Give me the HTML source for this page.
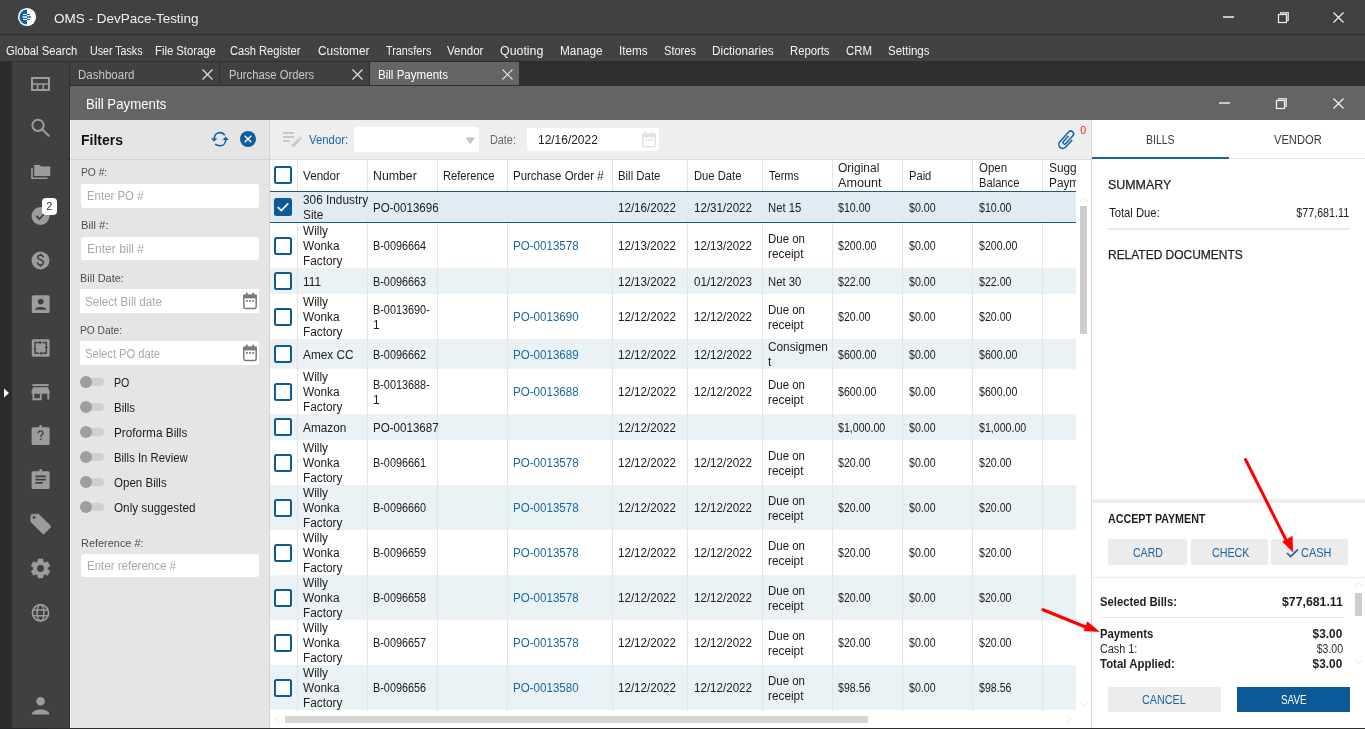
<!DOCTYPE html>
<html><head><meta charset="utf-8"><style>
html,body{margin:0;padding:0;}
body{width:1365px;height:729px;overflow:hidden;position:relative;background:#404040;font-family:"Liberation Sans",sans-serif;}
.b{position:absolute;}
.t{position:absolute;white-space:nowrap;}
#wrap{position:absolute;left:0;top:0;width:1365px;height:729px;overflow:hidden;will-change:transform;}
</style></head><body><div id="wrap">
<div class="b" style="left:0px;top:0px;width:1365px;height:34px;background:#414141;"></div>
<div class="b" style="left:0px;top:34px;width:1365px;height:1px;background:#2e2e2e;"></div>
<div class="b" style="left:0px;top:35px;width:1365px;height:26px;background:#424242;"></div>
<div class="b" style="left:0px;top:61px;width:1365px;height:1px;background:#2f2f2f;"></div>
<div class="b" style="left:0px;top:62px;width:12px;height:667px;background:#2b2b2b;"></div>
<div class="b" style="left:12px;top:62px;width:57px;height:667px;background:#404040;"></div>
<div class="b" style="left:69px;top:62px;width:1px;height:667px;background:#2f2f2f;"></div>
<div class="b" style="left:70px;top:62px;width:1295px;height:24px;background:#2f2f2f;"></div>
<div class="b" style="left:70px;top:62px;width:149px;height:23px;background:#404040;"></div>
<div class="b" style="left:220px;top:62px;width:149px;height:23px;background:#404040;"></div>
<div class="b" style="left:370px;top:62px;width:149px;height:23px;background:#656565;"></div>
<div class="b" style="left:70px;top:86px;width:1295px;height:34px;background:#646464;"></div>
<div class="b" style="left:70px;top:120px;width:199px;height:609px;background:#e5e5e5;"></div>
<div class="b" style="left:269px;top:120px;width:1px;height:609px;background:#d4d4d4;"></div>
<div class="b" style="left:270px;top:120px;width:822px;height:39px;background:#eeeeee;"></div>
<div class="b" style="left:270px;top:159px;width:822px;height:1px;background:#dcdcdc;"></div>
<div class="b" style="left:270px;top:160px;width:821px;height:569px;background:#ffffff;"></div>
<div class="b" style="left:1091px;top:120px;width:1px;height:609px;background:#dadada;"></div>
<div class="b" style="left:1092px;top:120px;width:273px;height:609px;background:#ffffff;"></div>
<div class="b" style="left:70px;top:120px;width:1px;height:608px;background:#f3f3f3;"></div>
<div class="b" style="left:0px;top:728px;width:1365px;height:1px;background:#2c2c2c;"></div>
<div class="b" style="left:0px;top:728px;width:48px;height:1px;background:#1d2b31;"></div>
<svg class="b" style="left:17px;top:7px" width="20" height="20" viewBox="0 0 20 20">
<circle cx="10" cy="10" r="9.1" fill="#ffffff"/>
<path d="M10 2.4 A7.6 7.6 0 0 0 10 17.6 Z" fill="#0f62a4"/>
<rect x="6" y="7" width="4" height="1.1" fill="#fff"/><rect x="5.6" y="9.3" width="4.4" height="1.5" fill="#fff"/><rect x="6" y="11.9" width="4" height="1.1" fill="#fff"/>
<rect x="10" y="7" width="3" height="1.1" fill="#0f62a4"/><rect x="10" y="9.3" width="3.8" height="1.5" fill="#0f62a4"/><rect x="10" y="11.9" width="3" height="1.1" fill="#0f62a4"/>
</svg>
<div class="t" style="top:10.00px;font-size:13.5px;line-height:17px;color:#f2f2f2;left:54.40px;transform:scaleX(0.9987);transform-origin:0 0;">OMS - DevPace-Testing</div>
<div class="b" style="left:1223px;top:16px;width:11px;height:2px;background:#c4c4c4;"></div>
<svg class="b" style="left:1277px;top:11px" width="13" height="13" viewBox="0 0 13 13">
<rect x="3.5" y="1.5" width="8" height="8" fill="#9a9a9a" stroke="#d0d0d0" stroke-width="1"/>
<rect x="1.5" y="3.5" width="8" height="8" fill="#414141" stroke="#f0f0f0" stroke-width="1.2"/>
</svg>
<svg class="b" style="left:1333px;top:12px" width="11" height="11" viewBox="0 0 11 11">
<path d="M0.5 0.5 L10.5 10.5 M10.5 0.5 L0.5 10.5" stroke="#f0f0f0" stroke-width="1.2"/></svg>
<div class="t" style="top:44.00px;font-size:12px;line-height:15px;color:#f4f4f4;left:6.20px;transform:scaleX(0.9379);transform-origin:0 0;">Global Search</div>
<div class="t" style="top:44.00px;font-size:12px;line-height:15px;color:#f4f4f4;left:90.20px;transform:scaleX(0.8883);transform-origin:0 0;">User Tasks</div>
<div class="t" style="top:44.00px;font-size:12px;line-height:15px;color:#f4f4f4;left:155.20px;transform:scaleX(0.9400);transform-origin:0 0;">File Storage</div>
<div class="t" style="top:44.00px;font-size:12px;line-height:15px;color:#f4f4f4;left:230.40px;transform:scaleX(0.9274);transform-origin:0 0;">Cash Register</div>
<div class="t" style="top:44.00px;font-size:12px;line-height:15px;color:#f4f4f4;left:317.50px;transform:scaleX(0.9900);transform-origin:0 0;">Customer</div>
<div class="t" style="top:44.00px;font-size:12px;line-height:15px;color:#f4f4f4;left:385.50px;transform:scaleX(0.9020);transform-origin:0 0;">Transfers</div>
<div class="t" style="top:44.00px;font-size:12px;line-height:15px;color:#f4f4f4;left:447.20px;transform:scaleX(0.9569);transform-origin:0 0;">Vendor</div>
<div class="t" style="top:44.00px;font-size:12px;line-height:15px;color:#f4f4f4;left:500.00px;transform:scaleX(1.0319);transform-origin:0 0;">Quoting</div>
<div class="t" style="top:44.00px;font-size:12px;line-height:15px;color:#f4f4f4;left:560.30px;transform:scaleX(0.9843);transform-origin:0 0;">Manage</div>
<div class="t" style="top:44.00px;font-size:12px;line-height:15px;color:#f4f4f4;left:619.20px;transform:scaleX(0.9782);transform-origin:0 0;">Items</div>
<div class="t" style="top:44.00px;font-size:12px;line-height:15px;color:#f4f4f4;left:664.00px;transform:scaleX(0.9227);transform-origin:0 0;">Stores</div>
<div class="t" style="top:44.00px;font-size:12px;line-height:15px;color:#f4f4f4;left:712.00px;transform:scaleX(0.9825);transform-origin:0 0;">Dictionaries</div>
<div class="t" style="top:44.00px;font-size:12px;line-height:15px;color:#f4f4f4;left:790.30px;transform:scaleX(0.9381);transform-origin:0 0;">Reports</div>
<div class="t" style="top:44.00px;font-size:12px;line-height:15px;color:#f4f4f4;left:846.00px;transform:scaleX(0.9524);transform-origin:0 0;">CRM</div>
<div class="t" style="top:44.00px;font-size:12px;line-height:15px;color:#f4f4f4;left:888.00px;transform:scaleX(0.9567);transform-origin:0 0;">Settings</div>
<div class="t" style="top:68.00px;font-size:12px;line-height:15px;color:#c9c9c9;left:78.30px;transform:scaleX(0.9611);transform-origin:0 0;">Dashboard</div>
<div class="t" style="top:68.00px;font-size:12px;line-height:15px;color:#c9c9c9;left:228.50px;transform:scaleX(0.9381);transform-origin:0 0;">Purchase Orders</div>
<div class="t" style="top:68.00px;font-size:12px;line-height:15px;color:#ffffff;left:378.40px;transform:scaleX(0.9640);transform-origin:0 0;">Bill Payments</div>
<svg class="b" style="left:202px;top:69px" width="11" height="11" viewBox="0 0 11 11"><path d="M0.5 0.5 L10.5 10.5 M10.5 0.5 L0.5 10.5" stroke="#e0e0e0" stroke-width="1.2"/></svg>
<svg class="b" style="left:352px;top:69px" width="11" height="11" viewBox="0 0 11 11"><path d="M0.5 0.5 L10.5 10.5 M10.5 0.5 L0.5 10.5" stroke="#e0e0e0" stroke-width="1.2"/></svg>
<svg class="b" style="left:502px;top:69px" width="11" height="11" viewBox="0 0 11 11"><path d="M0.5 0.5 L10.5 10.5 M10.5 0.5 L0.5 10.5" stroke="#e0e0e0" stroke-width="1.2"/></svg>
<div class="t" style="top:95.00px;font-size:14px;line-height:18px;color:#ffffff;left:86.40px;transform:scaleX(0.9465);transform-origin:0 0;">Bill Payments</div>
<div class="b" style="left:1219px;top:102px;width:11px;height:2px;background:#c8c8c8;"></div>
<svg class="b" style="left:1275px;top:97px" width="13" height="13" viewBox="0 0 13 13">
<rect x="3.5" y="1.5" width="8" height="8" fill="#a8a8a8" stroke="#d8d8d8" stroke-width="1"/>
<rect x="1.5" y="3.5" width="8" height="8" fill="#646464" stroke="#f4f4f4" stroke-width="1.2"/>
</svg>
<svg class="b" style="left:1333px;top:98px" width="11" height="11" viewBox="0 0 11 11">
<path d="M0.5 0.5 L10.5 10.5 M10.5 0.5 L0.5 10.5" stroke="#f4f4f4" stroke-width="1.2"/></svg>
<svg class="b" style="left:30px;top:76px" width="21" height="16" viewBox="0 0 21 16">
<rect x="2" y="2" width="17" height="12" fill="none" stroke="#9c9c9c" stroke-width="2"/>
<path d="M2 8 H19 M7.6 8 V14 M13.3 8 V14" stroke="#9c9c9c" stroke-width="1.6"/></svg>
<svg class="b" style="left:30px;top:117px" width="21" height="21" viewBox="0 0 21 21">
<circle cx="8" cy="8.3" r="5.6" fill="none" stroke="#9c9c9c" stroke-width="2"/>
<path d="M12 12.3 L18.8 18.8" stroke="#9c9c9c" stroke-width="2" stroke-linecap="round"/></svg>
<svg class="b" style="left:30px;top:163px" width="21" height="18" viewBox="0 0 21 18">
<path d="M4.2 1.9 H9.5 L11.3 3.4 H20.3 V13.1 H4.2 Z" fill="#9c9c9c"/>
<path d="M2 5 V15.3 H17.5" fill="none" stroke="#9c9c9c" stroke-width="1.6"/></svg>
<svg class="b" style="left:30px;top:196px" width="30" height="32" viewBox="0 0 30 32">
<circle cx="10.5" cy="20" r="9" fill="#9c9c9c"/>
<path d="M6.3 20 L9.3 23 L15 17" fill="none" stroke="#404040" stroke-width="1.8"/>
<rect x="12" y="2" width="15" height="17" rx="4" fill="#ffffff"/></svg>
<div class="t" style="top:199.00px;font-size:11px;line-height:14px;color:#333;left:46.20px;">2</div>
<svg class="b" style="left:30px;top:250px" width="21" height="21" viewBox="0 0 21 21">
<circle cx="10.5" cy="10.5" r="9" fill="#9c9c9c"/>
<path d="M13.4 7.4 C13.2 5.9 12 5.3 10.5 5.3 C8.8 5.3 7.7 6.2 7.7 7.5 C7.7 10.2 13.5 9.4 13.5 12.6 C13.5 14.1 12.2 15 10.5 15 C8.8 15 7.6 14.2 7.4 12.6 M10.5 3.4 V5.3 M10.5 15 V17" fill="none" stroke="#404040" stroke-width="1.5"/></svg>
<svg class="b" style="left:30px;top:294px" width="21" height="21" viewBox="0 0 21 21">
<rect x="1.8" y="1.3" width="17.8" height="17.8" rx="1.5" fill="#9c9c9c"/>
<circle cx="10.7" cy="7.6" r="2.9" fill="#404040"/>
<path d="M5 15.8 C5 12 16.4 12 16.4 15.8 Z" fill="#404040"/></svg>
<svg class="b" style="left:30px;top:338px" width="21" height="21" viewBox="0 0 21 21">
<rect x="1.8" y="1.2" width="17.8" height="17.6" rx="1.5" fill="#9c9c9c"/>
<path d="M5 9.3 V4.6 H10 M12.3 4.6 H16.3 V9.3 M16.3 11.3 V15.3 H11.3 M9 15.3 H5 V11" fill="none" stroke="#404040" stroke-width="1.5"/>
<path d="M9.6 2.7 L12 4.6 L9.6 6.5 Z M14.4 9 L18.2 9 L16.3 11.4 Z M11.6 13.4 L9.2 15.3 L11.6 17.2 Z M3.1 11.3 L6.9 11.3 L5 8.9 Z" fill="#404040"/></svg>
<svg class="b" style="left:30px;top:382px" width="21" height="20" viewBox="0 0 21 20">
<rect x="2.4" y="2.1" width="16.3" height="1.9" fill="#9c9c9c"/>
<path d="M3.2 5.3 H18 L19.7 9.5 V11.7 H1.5 V9.5 Z" fill="#9c9c9c"/>
<path d="M3.4 11.5 V17.2 H10.8 V11.5 M18.3 11.5 V17.6" fill="none" stroke="#9c9c9c" stroke-width="1.9"/></svg>
<svg class="b" style="left:30px;top:424px" width="21" height="22" viewBox="0 0 21 22">
<rect x="1.6" y="3.2" width="18" height="17.8" rx="1.5" fill="#9c9c9c"/>
<circle cx="10.6" cy="2.6" r="1.5" fill="#9c9c9c"/>
<path d="M8.2 9.2 C8.2 7.6 9.2 6.9 10.6 6.9 C12 6.9 13 7.7 13 9 C13 10.8 10.7 10.9 10.7 13" fill="none" stroke="#404040" stroke-width="1.4"/><rect x="9.9" y="14.6" width="1.6" height="1.6" fill="#404040"/></svg>
<svg class="b" style="left:30px;top:468px" width="21" height="22" viewBox="0 0 21 22">
<rect x="1.6" y="3.2" width="18" height="17.8" rx="1.5" fill="#9c9c9c"/>
<circle cx="10.6" cy="2.6" r="1.5" fill="#9c9c9c"/>
<path d="M5.4 8.4 H15.8 M5.4 11.6 H15.8 M5.4 14.8 H12.8" stroke="#404040" stroke-width="1.7"/></svg>
<svg class="b" style="left:30px;top:513px" width="22" height="23" viewBox="0 0 22 23">
<path d="M0.8 3.2 Q0.8 1.2 2.8 1.2 L8.6 1.2 L20.3 12.6 Q21.2 13.6 20.3 14.5 L14.3 20.5 Q13.4 21.4 12.5 20.5 L0.8 8.8 Z" fill="#9c9c9c" stroke="#9c9c9c" stroke-width="0.6" stroke-linejoin="round"/>
<circle cx="4" cy="4.5" r="1.4" fill="#404040"/></svg>
<svg class="b" style="left:30px;top:557.5px" width="21" height="21" viewBox="0 0 21 21">
<path d="M7.70 3.87 L8.08 1.00 L12.92 1.00 L13.30 3.87 L14.84 4.76 L17.51 3.65 L19.94 7.85 L17.65 9.61 L17.65 11.39 L19.94 13.15 L17.51 17.35 L14.84 16.24 L13.30 17.13 L12.92 20.00 L8.08 20.00 L7.70 17.13 L6.16 16.24 L3.49 17.35 L1.06 13.15 L3.35 11.39 L3.35 9.61 L1.06 7.85 L3.49 3.65 L6.16 4.76 Z" fill="#9c9c9c" stroke="#9c9c9c" stroke-width="0.5" stroke-linejoin="round"/><circle cx="10.5" cy="10.5" r="3.4" fill="#404040"/></svg>
<svg class="b" style="left:30px;top:602px" width="21" height="21" viewBox="0 0 21 21">
<circle cx="10.5" cy="10.8" r="8.1" fill="none" stroke="#9c9c9c" stroke-width="1.7"/>
<ellipse cx="10.5" cy="10.8" rx="3.4" ry="8.1" fill="none" stroke="#9c9c9c" stroke-width="1.5"/>
<path d="M2.6 7.9 H18.4 M2.6 13.7 H18.4" stroke="#9c9c9c" stroke-width="1.5"/></svg>
<svg class="b" style="left:30px;top:695px" width="21" height="22" viewBox="0 0 21 22">
<circle cx="10.6" cy="6.3" r="4.3" fill="#9c9c9c"/>
<path d="M1.8 19.4 C2.2 12.8 19 12.8 19.4 19.4 Z" fill="#9c9c9c"/></svg>
<svg class="b" style="left:2px;top:387px" width="8" height="12" viewBox="0 0 8 12"><path d="M2 1.5 L7 6 L2 10.5 Z" fill="#ffffff"/></svg>
<div class="t" style="top:130.00px;font-size:15px;line-height:19px;color:#111111;font-weight:bold;left:80.80px;transform:scaleX(0.9311);transform-origin:0 0;">Filters</div>
<svg class="b" style="left:210px;top:131px" width="20" height="16" viewBox="0 0 20 16">
<path d="M14.8 4.2 C13.6 2.3 11.8 1.6 10 1.6 C6.6 1.6 4.3 4.2 4.3 7.6" fill="none" stroke="#1262a0" stroke-width="1.6"/>
<path d="M1 7.2 L7.2 7.2 L4.1 10.8 Z" fill="#1262a0"/>
<path d="M5.2 13.2 C6.4 14.3 8 14.8 10 14.8 C13.4 14.8 15.7 12.2 15.7 8.8" fill="none" stroke="#1262a0" stroke-width="1.6"/>
<path d="M12.6 9 L18.8 9 L15.7 5.4 Z" fill="#1262a0"/></svg>
<svg class="b" style="left:240px;top:131px" width="16" height="16" viewBox="0 0 16 16">
<circle cx="8" cy="8" r="8" fill="#0c5e9b"/>
<path d="M4.7 4.7 L11.3 11.3 M11.3 4.7 L4.7 11.3" stroke="#fff" stroke-width="1.3"/></svg>
<div class="b" style="left:70px;top:159px;width:199px;height:1px;background:#d3d3d3;"></div>
<div class="t" style="top:165.00px;font-size:11px;line-height:14px;color:#4f4f4f;left:80.80px;transform:scaleX(0.9322);transform-origin:0 0;">PO #:</div>
<div class="b" style="left:80.5px;top:184px;width:178px;height:24px;background:#ffffff;border-radius:3px;"></div>
<div class="t" style="top:189.00px;font-size:12px;line-height:15px;color:#a9a9a9;left:86.50px;transform:scaleX(0.9521);transform-origin:0 0;">Enter PO #</div>
<div class="t" style="top:218.00px;font-size:11px;line-height:14px;color:#4f4f4f;left:80.80px;transform:scaleX(1.0225);transform-origin:0 0;">Bill #:</div>
<div class="b" style="left:80.5px;top:237px;width:178px;height:23px;background:#ffffff;border-radius:3px;"></div>
<div class="t" style="top:242.00px;font-size:12px;line-height:15px;color:#a9a9a9;left:86.50px;transform:scaleX(1.0053);transform-origin:0 0;">Enter bill #</div>
<div class="t" style="top:271.00px;font-size:11px;line-height:14px;color:#4f4f4f;left:80.30px;transform:scaleX(0.9977);transform-origin:0 0;">Bill Date:</div>
<div class="b" style="left:80px;top:289px;width:179px;height:24px;background:#ffffff;"></div>
<div class="t" style="top:295.00px;font-size:12px;line-height:15px;color:#a9a9a9;left:85.00px;transform:scaleX(0.9700);transform-origin:0 0;">Select Bill date</div>
<div class="t" style="top:323.00px;font-size:11px;line-height:14px;color:#4f4f4f;left:80.30px;transform:scaleX(0.9279);transform-origin:0 0;">PO Date:</div>
<div class="b" style="left:80px;top:341px;width:179px;height:24px;background:#ffffff;"></div>
<div class="t" style="top:347.00px;font-size:12px;line-height:15px;color:#a9a9a9;left:85.00px;transform:scaleX(0.9294);transform-origin:0 0;">Select PO date</div>
<svg class="b" style="left:242px;top:292px" width="16" height="18" viewBox="0 0 16 18">
<rect x="1.8" y="3.2" width="12.4" height="13.2" rx="1.6" fill="none" stroke="#7a7a7a" stroke-width="1.5"/>
<rect x="1.2" y="2.6" width="13.6" height="3.8" fill="#7a7a7a"/>
<rect x="3.9" y="0.6" width="1.8" height="2.8" fill="#7a7a7a"/><rect x="10.3" y="0.6" width="1.8" height="2.8" fill="#7a7a7a"/>
<rect x="4" y="8" width="1.8" height="1.8" fill="#7a7a7a"/><rect x="7.1" y="8" width="1.8" height="1.8" fill="#7a7a7a"/><rect x="10.2" y="8" width="1.8" height="1.8" fill="#7a7a7a"/>
</svg>
<svg class="b" style="left:242px;top:344px" width="16" height="18" viewBox="0 0 16 18">
<rect x="1.8" y="3.2" width="12.4" height="13.2" rx="1.6" fill="none" stroke="#7a7a7a" stroke-width="1.5"/>
<rect x="1.2" y="2.6" width="13.6" height="3.8" fill="#7a7a7a"/>
<rect x="3.9" y="0.6" width="1.8" height="2.8" fill="#7a7a7a"/><rect x="10.3" y="0.6" width="1.8" height="2.8" fill="#7a7a7a"/>
<rect x="4" y="8" width="1.8" height="1.8" fill="#7a7a7a"/><rect x="7.1" y="8" width="1.8" height="1.8" fill="#7a7a7a"/><rect x="10.2" y="8" width="1.8" height="1.8" fill="#7a7a7a"/>
</svg>
<div class="b" style="left:86px;top:378.1px;width:18px;height:8.4px;background:#d0d0d0;border-radius:4.2px;"></div>
<div class="b" style="left:80px;top:376.3px;width:12px;height:12px;background:#9e9e9e;border-radius:50%;"></div>
<div class="t" style="top:376.00px;font-size:12px;line-height:15px;color:#1c1c1c;left:114.30px;transform:scaleX(0.8881);transform-origin:0 0;">PO</div>
<div class="b" style="left:86px;top:403.1px;width:18px;height:8.4px;background:#d0d0d0;border-radius:4.2px;"></div>
<div class="b" style="left:80px;top:401.3px;width:12px;height:12px;background:#9e9e9e;border-radius:50%;"></div>
<div class="t" style="top:401.00px;font-size:12px;line-height:15px;color:#1c1c1c;left:114.30px;transform:scaleX(0.9537);transform-origin:0 0;">Bills</div>
<div class="b" style="left:86px;top:428.1px;width:18px;height:8.4px;background:#d0d0d0;border-radius:4.2px;"></div>
<div class="b" style="left:80px;top:426.3px;width:12px;height:12px;background:#9e9e9e;border-radius:50%;"></div>
<div class="t" style="top:426.00px;font-size:12px;line-height:15px;color:#1c1c1c;left:114.30px;transform:scaleX(0.9826);transform-origin:0 0;">Proforma Bills</div>
<div class="b" style="left:86px;top:453.1px;width:18px;height:8.4px;background:#d0d0d0;border-radius:4.2px;"></div>
<div class="b" style="left:80px;top:451.3px;width:12px;height:12px;background:#9e9e9e;border-radius:50%;"></div>
<div class="t" style="top:451.00px;font-size:12px;line-height:15px;color:#1c1c1c;left:114.30px;transform:scaleX(0.9454);transform-origin:0 0;">Bills In Review</div>
<div class="b" style="left:86px;top:478.1px;width:18px;height:8.4px;background:#d0d0d0;border-radius:4.2px;"></div>
<div class="b" style="left:80px;top:476.3px;width:12px;height:12px;background:#9e9e9e;border-radius:50%;"></div>
<div class="t" style="top:476.00px;font-size:12px;line-height:15px;color:#1c1c1c;left:114.30px;transform:scaleX(0.9631);transform-origin:0 0;">Open Bills</div>
<div class="b" style="left:86px;top:503.1px;width:18px;height:8.4px;background:#d0d0d0;border-radius:4.2px;"></div>
<div class="b" style="left:80px;top:501.3px;width:12px;height:12px;background:#9e9e9e;border-radius:50%;"></div>
<div class="t" style="top:501.00px;font-size:12px;line-height:15px;color:#1c1c1c;left:114.30px;transform:scaleX(0.9772);transform-origin:0 0;">Only suggested</div>
<div class="t" style="top:536.00px;font-size:11px;line-height:14px;color:#4f4f4f;left:80.60px;transform:scaleX(0.9940);transform-origin:0 0;">Reference #:</div>
<div class="b" style="left:80.5px;top:554px;width:178px;height:23px;background:#ffffff;border-radius:3px;"></div>
<div class="t" style="top:559.00px;font-size:12px;line-height:15px;color:#a9a9a9;left:86.50px;transform:scaleX(0.9601);transform-origin:0 0;">Enter reference #</div>
<svg class="b" style="left:282px;top:131px" width="20" height="17" viewBox="0 0 20 17">
<path d="M1 2 H12 M1 6 H12 M1 10 H7.8" stroke="#c8c8c8" stroke-width="1.9"/>
<path d="M10.4 15.4 L17.6 8.2" stroke="#c8c8c8" stroke-width="3"/>
<path d="M18.2 7.6 L19.3 6.5" stroke="#c8c8c8" stroke-width="3"/></svg>
<div class="t" style="top:133.00px;font-size:12px;line-height:15px;color:#1a67a3;left:309.30px;transform:scaleX(0.9458);transform-origin:0 0;">Vendor:</div>
<div class="b" style="left:354px;top:127px;width:125px;height:25px;background:#ffffff;border-radius:3px;"></div>
<svg class="b" style="left:465px;top:137px" width="11" height="8" viewBox="0 0 11 8"><path d="M0.5 0.5 H10.2 L5.35 7.2 Z" fill="#c4c4c4"/></svg>
<div class="t" style="top:133.00px;font-size:12px;line-height:15px;color:#686868;left:489.50px;transform:scaleX(0.9031);transform-origin:0 0;">Date:</div>
<div class="b" style="left:527px;top:128px;width:132px;height:23px;background:#ffffff;border-radius:3px;"></div>
<div class="t" style="top:133.00px;font-size:12px;line-height:15px;color:#222222;left:537.80px;transform:scaleX(0.9957);transform-origin:0 0;">12/16/2022</div>
<svg class="b" style="left:641px;top:131px" width="16" height="17" viewBox="0 0 16 17">
<rect x="1.8" y="3.2" width="12.4" height="12.6" rx="1.6" fill="none" stroke="#e2e2e2" stroke-width="1.5"/>
<rect x="1.2" y="2.6" width="13.6" height="3.8" fill="#e2e2e2"/>
<rect x="3.9" y="0.6" width="1.8" height="2.8" fill="#e2e2e2"/><rect x="10.3" y="0.6" width="1.8" height="2.8" fill="#e2e2e2"/>
<rect x="4" y="8" width="1.8" height="1.8" fill="#e2e2e2"/><rect x="7.1" y="8" width="1.8" height="1.8" fill="#e2e2e2"/><rect x="10.2" y="8" width="1.8" height="1.8" fill="#e2e2e2"/>
</svg>
<svg class="b" style="left:1054px;top:127px" width="24" height="25" viewBox="0 0 24 25">
<g transform="translate(12.8 13) rotate(42) scale(0.88) translate(-5 -12.2)">
<path d="M9.5 8 V19 A4.5 4.5 0 0 1 0.5 19 V4 A3.2 3.2 0 0 1 6.9 4 V16 A1.8 1.8 0 0 1 3.3 16 V7.5" fill="none" stroke="#1565a0" stroke-width="1.75"/>
</g></svg>
<div class="t" style="top:124.00px;font-size:10.5px;line-height:13px;color:#ff1a1a;left:1080.30px;">0</div>
<div class="b" style="left:270px;top:160px;width:806px;height:551px;overflow:hidden;">
<div class="b" style="left:0px;top:31px;width:806px;height:32px;background:#e2ebf1;"></div>
<div class="b" style="left:0px;top:108px;width:806px;height:26px;background:#eaf2f6;"></div>
<div class="b" style="left:0px;top:179px;width:806px;height:30px;background:#eaf2f6;"></div>
<div class="b" style="left:0px;top:254px;width:806px;height:26px;background:#eaf2f6;"></div>
<div class="b" style="left:0px;top:325px;width:806px;height:45px;background:#eaf2f6;"></div>
<div class="b" style="left:0px;top:415px;width:806px;height:45px;background:#eaf2f6;"></div>
<div class="b" style="left:0px;top:505px;width:806px;height:45px;background:#eaf2f6;"></div>
<div class="b" style="left:27px;top:0px;width:1px;height:551px;background:#e2e6ea;"></div>
<div class="b" style="left:97px;top:0px;width:1px;height:551px;background:#e2e6ea;"></div>
<div class="b" style="left:167px;top:0px;width:1px;height:551px;background:#e2e6ea;"></div>
<div class="b" style="left:237px;top:0px;width:1px;height:551px;background:#e2e6ea;"></div>
<div class="b" style="left:342px;top:0px;width:1px;height:551px;background:#e2e6ea;"></div>
<div class="b" style="left:417px;top:0px;width:1px;height:551px;background:#e2e6ea;"></div>
<div class="b" style="left:492px;top:0px;width:1px;height:551px;background:#e2e6ea;"></div>
<div class="b" style="left:562px;top:0px;width:1px;height:551px;background:#e2e6ea;"></div>
<div class="b" style="left:632px;top:0px;width:1px;height:551px;background:#e2e6ea;"></div>
<div class="b" style="left:702px;top:0px;width:1px;height:551px;background:#e2e6ea;"></div>
<div class="b" style="left:772px;top:0px;width:1px;height:551px;background:#e2e6ea;"></div>
<div class="b" style="left:0px;top:31px;width:806px;height:1px;background:#145d91;"></div>
<div class="b" style="left:0px;top:62px;width:806px;height:1px;background:#145d91;"></div>
<div class="t" style="top:9.00px;font-size:12px;line-height:15px;color:#1e1e1e;left:33.20px;transform:scaleX(0.9727);transform-origin:0 0;">Vendor</div>
<div class="t" style="top:9.00px;font-size:12px;line-height:15px;color:#1e1e1e;left:103.30px;transform:scaleX(1.0267);transform-origin:0 0;">Number</div>
<div class="t" style="top:9.00px;font-size:12px;line-height:15px;color:#1e1e1e;left:173.20px;transform:scaleX(0.9281);transform-origin:0 0;">Reference</div>
<div class="t" style="top:9.00px;font-size:12px;line-height:15px;color:#1e1e1e;left:243.40px;transform:scaleX(0.9563);transform-origin:0 0;">Purchase Order #</div>
<div class="t" style="top:9.00px;font-size:12px;line-height:15px;color:#1e1e1e;left:348.40px;transform:scaleX(0.9485);transform-origin:0 0;">Bill Date</div>
<div class="t" style="top:9.00px;font-size:12px;line-height:15px;color:#1e1e1e;left:423.50px;transform:scaleX(0.9369);transform-origin:0 0;">Due Date</div>
<div class="t" style="top:9.00px;font-size:12px;line-height:15px;color:#1e1e1e;left:498.80px;transform:scaleX(0.9191);transform-origin:0 0;">Terms</div>
<div class="t" style="top:9.00px;font-size:12px;line-height:15px;color:#1e1e1e;left:638.50px;transform:scaleX(0.9292);transform-origin:0 0;">Paid</div>
<div class="t" style="top:1.00px;font-size:12px;line-height:15px;color:#1e1e1e;left:568.40px;transform:scaleX(0.9990);transform-origin:0 0;">Original</div>
<div class="t" style="top:16.00px;font-size:12px;line-height:15px;color:#1e1e1e;left:568.40px;transform:scaleX(1.0522);transform-origin:0 0;">Amount</div>
<div class="t" style="top:1.00px;font-size:12px;line-height:15px;color:#1e1e1e;left:708.50px;transform:scaleX(0.9543);transform-origin:0 0;">Open</div>
<div class="t" style="top:16.00px;font-size:12px;line-height:15px;color:#1e1e1e;left:708.50px;transform:scaleX(0.9313);transform-origin:0 0;">Balance</div>
<div class="t" style="top:1.00px;font-size:12px;line-height:15px;color:#1e1e1e;left:778.50px;transform:scaleX(0.9850);transform-origin:0 0;">Suggested</div>
<div class="t" style="top:16.00px;font-size:12px;line-height:15px;color:#1e1e1e;left:778.50px;transform:scaleX(0.9850);transform-origin:0 0;">Payment</div>
<div class="t" style="top:33.00px;font-size:12px;line-height:15px;color:#202020;left:33.20px;transform:scaleX(0.9850);transform-origin:0 0;">306 Industry</div>
<div class="t" style="top:48.00px;font-size:12px;line-height:15px;color:#202020;left:33.20px;transform:scaleX(0.9850);transform-origin:0 0;">Site</div>
<div class="t" style="top:41.00px;font-size:12px;line-height:15px;color:#202020;left:103.30px;transform:scaleX(0.9650);transform-origin:0 0;">PO-0013696</div>
<div class="t" style="top:41.00px;font-size:12px;line-height:15px;color:#202020;left:348.40px;transform:scaleX(0.9660);transform-origin:0 0;">12/16/2022</div>
<div class="t" style="top:41.00px;font-size:12px;line-height:15px;color:#202020;left:423.50px;transform:scaleX(0.9660);transform-origin:0 0;">12/31/2022</div>
<div class="t" style="top:41.00px;font-size:12px;line-height:15px;color:#202020;left:498.20px;transform:scaleX(0.9400);transform-origin:0 0;">Net 15</div>
<div class="t" style="top:41.00px;font-size:12px;line-height:15px;color:#202020;left:568.40px;transform:scaleX(0.8850);transform-origin:0 0;">$10.00</div>
<div class="t" style="top:41.00px;font-size:12px;line-height:15px;color:#202020;left:638.50px;transform:scaleX(0.8850);transform-origin:0 0;">$0.00</div>
<div class="t" style="top:41.00px;font-size:12px;line-height:15px;color:#202020;left:708.50px;transform:scaleX(0.8850);transform-origin:0 0;">$10.00</div>
<div class="t" style="top:64.00px;font-size:12px;line-height:15px;color:#202020;left:33.20px;transform:scaleX(0.9850);transform-origin:0 0;">Willy</div>
<div class="t" style="top:79.00px;font-size:12px;line-height:15px;color:#202020;left:33.20px;transform:scaleX(0.9850);transform-origin:0 0;">Wonka</div>
<div class="t" style="top:94.00px;font-size:12px;line-height:15px;color:#202020;left:33.20px;transform:scaleX(0.9850);transform-origin:0 0;">Factory</div>
<div class="t" style="top:79.00px;font-size:12px;line-height:15px;color:#202020;left:103.30px;transform:scaleX(0.9050);transform-origin:0 0;">B-0096664</div>
<div class="t" style="top:79.00px;font-size:12px;line-height:15px;color:#1a67a3;left:243.40px;transform:scaleX(0.9650);transform-origin:0 0;">PO-0013578</div>
<div class="t" style="top:79.00px;font-size:12px;line-height:15px;color:#202020;left:348.40px;transform:scaleX(0.9660);transform-origin:0 0;">12/13/2022</div>
<div class="t" style="top:79.00px;font-size:12px;line-height:15px;color:#202020;left:423.50px;transform:scaleX(0.9660);transform-origin:0 0;">12/13/2022</div>
<div class="t" style="top:72.00px;font-size:12px;line-height:15px;color:#202020;left:498.20px;transform:scaleX(0.9560);transform-origin:0 0;">Due on</div>
<div class="t" style="top:87.00px;font-size:12px;line-height:15px;color:#202020;left:498.20px;transform:scaleX(0.9850);transform-origin:0 0;">receipt</div>
<div class="t" style="top:79.00px;font-size:12px;line-height:15px;color:#202020;left:568.40px;transform:scaleX(0.8850);transform-origin:0 0;">$200.00</div>
<div class="t" style="top:79.00px;font-size:12px;line-height:15px;color:#202020;left:638.50px;transform:scaleX(0.8850);transform-origin:0 0;">$0.00</div>
<div class="t" style="top:79.00px;font-size:12px;line-height:15px;color:#202020;left:708.50px;transform:scaleX(0.8850);transform-origin:0 0;">$200.00</div>
<div class="t" style="top:115.00px;font-size:12px;line-height:15px;color:#202020;left:33.20px;transform:scaleX(0.9850);transform-origin:0 0;">111</div>
<div class="t" style="top:115.00px;font-size:12px;line-height:15px;color:#202020;left:103.30px;transform:scaleX(0.9050);transform-origin:0 0;">B-0096663</div>
<div class="t" style="top:115.00px;font-size:12px;line-height:15px;color:#202020;left:348.40px;transform:scaleX(0.9660);transform-origin:0 0;">12/13/2022</div>
<div class="t" style="top:115.00px;font-size:12px;line-height:15px;color:#202020;left:423.50px;transform:scaleX(0.9660);transform-origin:0 0;">01/12/2023</div>
<div class="t" style="top:115.00px;font-size:12px;line-height:15px;color:#202020;left:498.20px;transform:scaleX(0.9400);transform-origin:0 0;">Net 30</div>
<div class="t" style="top:115.00px;font-size:12px;line-height:15px;color:#202020;left:568.40px;transform:scaleX(0.8850);transform-origin:0 0;">$22.00</div>
<div class="t" style="top:115.00px;font-size:12px;line-height:15px;color:#202020;left:638.50px;transform:scaleX(0.8850);transform-origin:0 0;">$0.00</div>
<div class="t" style="top:115.00px;font-size:12px;line-height:15px;color:#202020;left:708.50px;transform:scaleX(0.8850);transform-origin:0 0;">$22.00</div>
<div class="t" style="top:135.00px;font-size:12px;line-height:15px;color:#202020;left:33.20px;transform:scaleX(0.9850);transform-origin:0 0;">Willy</div>
<div class="t" style="top:150.00px;font-size:12px;line-height:15px;color:#202020;left:33.20px;transform:scaleX(0.9850);transform-origin:0 0;">Wonka</div>
<div class="t" style="top:165.00px;font-size:12px;line-height:15px;color:#202020;left:33.20px;transform:scaleX(0.9850);transform-origin:0 0;">Factory</div>
<div class="t" style="top:143.00px;font-size:12px;line-height:15px;color:#202020;left:103.30px;transform:scaleX(0.9050);transform-origin:0 0;">B-0013690-</div>
<div class="t" style="top:158.00px;font-size:12px;line-height:15px;color:#202020;left:103.30px;transform:scaleX(0.9850);transform-origin:0 0;">1</div>
<div class="t" style="top:150.00px;font-size:12px;line-height:15px;color:#1a67a3;left:243.40px;transform:scaleX(0.9650);transform-origin:0 0;">PO-0013690</div>
<div class="t" style="top:150.00px;font-size:12px;line-height:15px;color:#202020;left:348.40px;transform:scaleX(0.9660);transform-origin:0 0;">12/12/2022</div>
<div class="t" style="top:150.00px;font-size:12px;line-height:15px;color:#202020;left:423.50px;transform:scaleX(0.9660);transform-origin:0 0;">12/12/2022</div>
<div class="t" style="top:143.00px;font-size:12px;line-height:15px;color:#202020;left:498.20px;transform:scaleX(0.9560);transform-origin:0 0;">Due on</div>
<div class="t" style="top:158.00px;font-size:12px;line-height:15px;color:#202020;left:498.20px;transform:scaleX(0.9850);transform-origin:0 0;">receipt</div>
<div class="t" style="top:150.00px;font-size:12px;line-height:15px;color:#202020;left:568.40px;transform:scaleX(0.8850);transform-origin:0 0;">$20.00</div>
<div class="t" style="top:150.00px;font-size:12px;line-height:15px;color:#202020;left:638.50px;transform:scaleX(0.8850);transform-origin:0 0;">$0.00</div>
<div class="t" style="top:150.00px;font-size:12px;line-height:15px;color:#202020;left:708.50px;transform:scaleX(0.8850);transform-origin:0 0;">$20.00</div>
<div class="t" style="top:188.00px;font-size:12px;line-height:15px;color:#202020;left:33.20px;transform:scaleX(0.9850);transform-origin:0 0;">Amex CC</div>
<div class="t" style="top:188.00px;font-size:12px;line-height:15px;color:#202020;left:103.30px;transform:scaleX(0.9050);transform-origin:0 0;">B-0096662</div>
<div class="t" style="top:188.00px;font-size:12px;line-height:15px;color:#1a67a3;left:243.40px;transform:scaleX(0.9650);transform-origin:0 0;">PO-0013689</div>
<div class="t" style="top:188.00px;font-size:12px;line-height:15px;color:#202020;left:348.40px;transform:scaleX(0.9660);transform-origin:0 0;">12/12/2022</div>
<div class="t" style="top:188.00px;font-size:12px;line-height:15px;color:#202020;left:423.50px;transform:scaleX(0.9660);transform-origin:0 0;">12/12/2022</div>
<div class="t" style="top:180.00px;font-size:12px;line-height:15px;color:#202020;left:498.20px;transform:scaleX(0.9850);transform-origin:0 0;">Consigmen</div>
<div class="t" style="top:195.00px;font-size:12px;line-height:15px;color:#202020;left:498.20px;transform:scaleX(0.9850);transform-origin:0 0;">t</div>
<div class="t" style="top:188.00px;font-size:12px;line-height:15px;color:#202020;left:568.40px;transform:scaleX(0.8850);transform-origin:0 0;">$600.00</div>
<div class="t" style="top:188.00px;font-size:12px;line-height:15px;color:#202020;left:638.50px;transform:scaleX(0.8850);transform-origin:0 0;">$0.00</div>
<div class="t" style="top:188.00px;font-size:12px;line-height:15px;color:#202020;left:708.50px;transform:scaleX(0.8850);transform-origin:0 0;">$600.00</div>
<div class="t" style="top:210.00px;font-size:12px;line-height:15px;color:#202020;left:33.20px;transform:scaleX(0.9850);transform-origin:0 0;">Willy</div>
<div class="t" style="top:225.00px;font-size:12px;line-height:15px;color:#202020;left:33.20px;transform:scaleX(0.9850);transform-origin:0 0;">Wonka</div>
<div class="t" style="top:240.00px;font-size:12px;line-height:15px;color:#202020;left:33.20px;transform:scaleX(0.9850);transform-origin:0 0;">Factory</div>
<div class="t" style="top:218.00px;font-size:12px;line-height:15px;color:#202020;left:103.30px;transform:scaleX(0.9050);transform-origin:0 0;">B-0013688-</div>
<div class="t" style="top:233.00px;font-size:12px;line-height:15px;color:#202020;left:103.30px;transform:scaleX(0.9850);transform-origin:0 0;">1</div>
<div class="t" style="top:225.00px;font-size:12px;line-height:15px;color:#1a67a3;left:243.40px;transform:scaleX(0.9650);transform-origin:0 0;">PO-0013688</div>
<div class="t" style="top:225.00px;font-size:12px;line-height:15px;color:#202020;left:348.40px;transform:scaleX(0.9660);transform-origin:0 0;">12/12/2022</div>
<div class="t" style="top:225.00px;font-size:12px;line-height:15px;color:#202020;left:423.50px;transform:scaleX(0.9660);transform-origin:0 0;">12/12/2022</div>
<div class="t" style="top:218.00px;font-size:12px;line-height:15px;color:#202020;left:498.20px;transform:scaleX(0.9560);transform-origin:0 0;">Due on</div>
<div class="t" style="top:233.00px;font-size:12px;line-height:15px;color:#202020;left:498.20px;transform:scaleX(0.9850);transform-origin:0 0;">receipt</div>
<div class="t" style="top:225.00px;font-size:12px;line-height:15px;color:#202020;left:568.40px;transform:scaleX(0.8850);transform-origin:0 0;">$600.00</div>
<div class="t" style="top:225.00px;font-size:12px;line-height:15px;color:#202020;left:638.50px;transform:scaleX(0.8850);transform-origin:0 0;">$0.00</div>
<div class="t" style="top:225.00px;font-size:12px;line-height:15px;color:#202020;left:708.50px;transform:scaleX(0.8850);transform-origin:0 0;">$600.00</div>
<div class="t" style="top:261.00px;font-size:12px;line-height:15px;color:#202020;left:33.20px;transform:scaleX(0.9850);transform-origin:0 0;">Amazon</div>
<div class="t" style="top:261.00px;font-size:12px;line-height:15px;color:#202020;left:103.30px;transform:scaleX(0.9650);transform-origin:0 0;">PO-0013687</div>
<div class="t" style="top:261.00px;font-size:12px;line-height:15px;color:#202020;left:348.40px;transform:scaleX(0.9660);transform-origin:0 0;">12/12/2022</div>
<div class="t" style="top:261.00px;font-size:12px;line-height:15px;color:#202020;left:568.40px;transform:scaleX(0.8850);transform-origin:0 0;">$1,000.00</div>
<div class="t" style="top:261.00px;font-size:12px;line-height:15px;color:#202020;left:638.50px;transform:scaleX(0.8850);transform-origin:0 0;">$0.00</div>
<div class="t" style="top:261.00px;font-size:12px;line-height:15px;color:#202020;left:708.50px;transform:scaleX(0.8850);transform-origin:0 0;">$1,000.00</div>
<div class="t" style="top:281.00px;font-size:12px;line-height:15px;color:#202020;left:33.20px;transform:scaleX(0.9850);transform-origin:0 0;">Willy</div>
<div class="t" style="top:296.00px;font-size:12px;line-height:15px;color:#202020;left:33.20px;transform:scaleX(0.9850);transform-origin:0 0;">Wonka</div>
<div class="t" style="top:311.00px;font-size:12px;line-height:15px;color:#202020;left:33.20px;transform:scaleX(0.9850);transform-origin:0 0;">Factory</div>
<div class="t" style="top:296.00px;font-size:12px;line-height:15px;color:#202020;left:103.30px;transform:scaleX(0.9050);transform-origin:0 0;">B-0096661</div>
<div class="t" style="top:296.00px;font-size:12px;line-height:15px;color:#1a67a3;left:243.40px;transform:scaleX(0.9650);transform-origin:0 0;">PO-0013578</div>
<div class="t" style="top:296.00px;font-size:12px;line-height:15px;color:#202020;left:348.40px;transform:scaleX(0.9660);transform-origin:0 0;">12/12/2022</div>
<div class="t" style="top:296.00px;font-size:12px;line-height:15px;color:#202020;left:423.50px;transform:scaleX(0.9660);transform-origin:0 0;">12/12/2022</div>
<div class="t" style="top:289.00px;font-size:12px;line-height:15px;color:#202020;left:498.20px;transform:scaleX(0.9560);transform-origin:0 0;">Due on</div>
<div class="t" style="top:304.00px;font-size:12px;line-height:15px;color:#202020;left:498.20px;transform:scaleX(0.9850);transform-origin:0 0;">receipt</div>
<div class="t" style="top:296.00px;font-size:12px;line-height:15px;color:#202020;left:568.40px;transform:scaleX(0.8850);transform-origin:0 0;">$20.00</div>
<div class="t" style="top:296.00px;font-size:12px;line-height:15px;color:#202020;left:638.50px;transform:scaleX(0.8850);transform-origin:0 0;">$0.00</div>
<div class="t" style="top:296.00px;font-size:12px;line-height:15px;color:#202020;left:708.50px;transform:scaleX(0.8850);transform-origin:0 0;">$20.00</div>
<div class="t" style="top:326.00px;font-size:12px;line-height:15px;color:#202020;left:33.20px;transform:scaleX(0.9850);transform-origin:0 0;">Willy</div>
<div class="t" style="top:341.00px;font-size:12px;line-height:15px;color:#202020;left:33.20px;transform:scaleX(0.9850);transform-origin:0 0;">Wonka</div>
<div class="t" style="top:356.00px;font-size:12px;line-height:15px;color:#202020;left:33.20px;transform:scaleX(0.9850);transform-origin:0 0;">Factory</div>
<div class="t" style="top:341.00px;font-size:12px;line-height:15px;color:#202020;left:103.30px;transform:scaleX(0.9050);transform-origin:0 0;">B-0096660</div>
<div class="t" style="top:341.00px;font-size:12px;line-height:15px;color:#1a67a3;left:243.40px;transform:scaleX(0.9650);transform-origin:0 0;">PO-0013578</div>
<div class="t" style="top:341.00px;font-size:12px;line-height:15px;color:#202020;left:348.40px;transform:scaleX(0.9660);transform-origin:0 0;">12/12/2022</div>
<div class="t" style="top:341.00px;font-size:12px;line-height:15px;color:#202020;left:423.50px;transform:scaleX(0.9660);transform-origin:0 0;">12/12/2022</div>
<div class="t" style="top:334.00px;font-size:12px;line-height:15px;color:#202020;left:498.20px;transform:scaleX(0.9560);transform-origin:0 0;">Due on</div>
<div class="t" style="top:349.00px;font-size:12px;line-height:15px;color:#202020;left:498.20px;transform:scaleX(0.9850);transform-origin:0 0;">receipt</div>
<div class="t" style="top:341.00px;font-size:12px;line-height:15px;color:#202020;left:568.40px;transform:scaleX(0.8850);transform-origin:0 0;">$20.00</div>
<div class="t" style="top:341.00px;font-size:12px;line-height:15px;color:#202020;left:638.50px;transform:scaleX(0.8850);transform-origin:0 0;">$0.00</div>
<div class="t" style="top:341.00px;font-size:12px;line-height:15px;color:#202020;left:708.50px;transform:scaleX(0.8850);transform-origin:0 0;">$20.00</div>
<div class="t" style="top:371.00px;font-size:12px;line-height:15px;color:#202020;left:33.20px;transform:scaleX(0.9850);transform-origin:0 0;">Willy</div>
<div class="t" style="top:386.00px;font-size:12px;line-height:15px;color:#202020;left:33.20px;transform:scaleX(0.9850);transform-origin:0 0;">Wonka</div>
<div class="t" style="top:401.00px;font-size:12px;line-height:15px;color:#202020;left:33.20px;transform:scaleX(0.9850);transform-origin:0 0;">Factory</div>
<div class="t" style="top:386.00px;font-size:12px;line-height:15px;color:#202020;left:103.30px;transform:scaleX(0.9050);transform-origin:0 0;">B-0096659</div>
<div class="t" style="top:386.00px;font-size:12px;line-height:15px;color:#1a67a3;left:243.40px;transform:scaleX(0.9650);transform-origin:0 0;">PO-0013578</div>
<div class="t" style="top:386.00px;font-size:12px;line-height:15px;color:#202020;left:348.40px;transform:scaleX(0.9660);transform-origin:0 0;">12/12/2022</div>
<div class="t" style="top:386.00px;font-size:12px;line-height:15px;color:#202020;left:423.50px;transform:scaleX(0.9660);transform-origin:0 0;">12/12/2022</div>
<div class="t" style="top:379.00px;font-size:12px;line-height:15px;color:#202020;left:498.20px;transform:scaleX(0.9560);transform-origin:0 0;">Due on</div>
<div class="t" style="top:394.00px;font-size:12px;line-height:15px;color:#202020;left:498.20px;transform:scaleX(0.9850);transform-origin:0 0;">receipt</div>
<div class="t" style="top:386.00px;font-size:12px;line-height:15px;color:#202020;left:568.40px;transform:scaleX(0.8850);transform-origin:0 0;">$20.00</div>
<div class="t" style="top:386.00px;font-size:12px;line-height:15px;color:#202020;left:638.50px;transform:scaleX(0.8850);transform-origin:0 0;">$0.00</div>
<div class="t" style="top:386.00px;font-size:12px;line-height:15px;color:#202020;left:708.50px;transform:scaleX(0.8850);transform-origin:0 0;">$20.00</div>
<div class="t" style="top:416.00px;font-size:12px;line-height:15px;color:#202020;left:33.20px;transform:scaleX(0.9850);transform-origin:0 0;">Willy</div>
<div class="t" style="top:431.00px;font-size:12px;line-height:15px;color:#202020;left:33.20px;transform:scaleX(0.9850);transform-origin:0 0;">Wonka</div>
<div class="t" style="top:446.00px;font-size:12px;line-height:15px;color:#202020;left:33.20px;transform:scaleX(0.9850);transform-origin:0 0;">Factory</div>
<div class="t" style="top:431.00px;font-size:12px;line-height:15px;color:#202020;left:103.30px;transform:scaleX(0.9050);transform-origin:0 0;">B-0096658</div>
<div class="t" style="top:431.00px;font-size:12px;line-height:15px;color:#1a67a3;left:243.40px;transform:scaleX(0.9650);transform-origin:0 0;">PO-0013578</div>
<div class="t" style="top:431.00px;font-size:12px;line-height:15px;color:#202020;left:348.40px;transform:scaleX(0.9660);transform-origin:0 0;">12/12/2022</div>
<div class="t" style="top:431.00px;font-size:12px;line-height:15px;color:#202020;left:423.50px;transform:scaleX(0.9660);transform-origin:0 0;">12/12/2022</div>
<div class="t" style="top:424.00px;font-size:12px;line-height:15px;color:#202020;left:498.20px;transform:scaleX(0.9560);transform-origin:0 0;">Due on</div>
<div class="t" style="top:439.00px;font-size:12px;line-height:15px;color:#202020;left:498.20px;transform:scaleX(0.9850);transform-origin:0 0;">receipt</div>
<div class="t" style="top:431.00px;font-size:12px;line-height:15px;color:#202020;left:568.40px;transform:scaleX(0.8850);transform-origin:0 0;">$20.00</div>
<div class="t" style="top:431.00px;font-size:12px;line-height:15px;color:#202020;left:638.50px;transform:scaleX(0.8850);transform-origin:0 0;">$0.00</div>
<div class="t" style="top:431.00px;font-size:12px;line-height:15px;color:#202020;left:708.50px;transform:scaleX(0.8850);transform-origin:0 0;">$20.00</div>
<div class="t" style="top:461.00px;font-size:12px;line-height:15px;color:#202020;left:33.20px;transform:scaleX(0.9850);transform-origin:0 0;">Willy</div>
<div class="t" style="top:476.00px;font-size:12px;line-height:15px;color:#202020;left:33.20px;transform:scaleX(0.9850);transform-origin:0 0;">Wonka</div>
<div class="t" style="top:491.00px;font-size:12px;line-height:15px;color:#202020;left:33.20px;transform:scaleX(0.9850);transform-origin:0 0;">Factory</div>
<div class="t" style="top:476.00px;font-size:12px;line-height:15px;color:#202020;left:103.30px;transform:scaleX(0.9050);transform-origin:0 0;">B-0096657</div>
<div class="t" style="top:476.00px;font-size:12px;line-height:15px;color:#1a67a3;left:243.40px;transform:scaleX(0.9650);transform-origin:0 0;">PO-0013578</div>
<div class="t" style="top:476.00px;font-size:12px;line-height:15px;color:#202020;left:348.40px;transform:scaleX(0.9660);transform-origin:0 0;">12/12/2022</div>
<div class="t" style="top:476.00px;font-size:12px;line-height:15px;color:#202020;left:423.50px;transform:scaleX(0.9660);transform-origin:0 0;">12/12/2022</div>
<div class="t" style="top:469.00px;font-size:12px;line-height:15px;color:#202020;left:498.20px;transform:scaleX(0.9560);transform-origin:0 0;">Due on</div>
<div class="t" style="top:484.00px;font-size:12px;line-height:15px;color:#202020;left:498.20px;transform:scaleX(0.9850);transform-origin:0 0;">receipt</div>
<div class="t" style="top:476.00px;font-size:12px;line-height:15px;color:#202020;left:568.40px;transform:scaleX(0.8850);transform-origin:0 0;">$20.00</div>
<div class="t" style="top:476.00px;font-size:12px;line-height:15px;color:#202020;left:638.50px;transform:scaleX(0.8850);transform-origin:0 0;">$0.00</div>
<div class="t" style="top:476.00px;font-size:12px;line-height:15px;color:#202020;left:708.50px;transform:scaleX(0.8850);transform-origin:0 0;">$20.00</div>
<div class="t" style="top:506.00px;font-size:12px;line-height:15px;color:#202020;left:33.20px;transform:scaleX(0.9850);transform-origin:0 0;">Willy</div>
<div class="t" style="top:521.00px;font-size:12px;line-height:15px;color:#202020;left:33.20px;transform:scaleX(0.9850);transform-origin:0 0;">Wonka</div>
<div class="t" style="top:536.00px;font-size:12px;line-height:15px;color:#202020;left:33.20px;transform:scaleX(0.9850);transform-origin:0 0;">Factory</div>
<div class="t" style="top:521.00px;font-size:12px;line-height:15px;color:#202020;left:103.30px;transform:scaleX(0.9050);transform-origin:0 0;">B-0096656</div>
<div class="t" style="top:521.00px;font-size:12px;line-height:15px;color:#1a67a3;left:243.40px;transform:scaleX(0.9650);transform-origin:0 0;">PO-0013580</div>
<div class="t" style="top:521.00px;font-size:12px;line-height:15px;color:#202020;left:348.40px;transform:scaleX(0.9660);transform-origin:0 0;">12/12/2022</div>
<div class="t" style="top:521.00px;font-size:12px;line-height:15px;color:#202020;left:423.50px;transform:scaleX(0.9660);transform-origin:0 0;">12/12/2022</div>
<div class="t" style="top:514.00px;font-size:12px;line-height:15px;color:#202020;left:498.20px;transform:scaleX(0.9560);transform-origin:0 0;">Due on</div>
<div class="t" style="top:529.00px;font-size:12px;line-height:15px;color:#202020;left:498.20px;transform:scaleX(0.9850);transform-origin:0 0;">receipt</div>
<div class="t" style="top:521.00px;font-size:12px;line-height:15px;color:#202020;left:568.40px;transform:scaleX(0.8850);transform-origin:0 0;">$98.56</div>
<div class="t" style="top:521.00px;font-size:12px;line-height:15px;color:#202020;left:638.50px;transform:scaleX(0.8850);transform-origin:0 0;">$0.00</div>
<div class="t" style="top:521.00px;font-size:12px;line-height:15px;color:#202020;left:708.50px;transform:scaleX(0.8850);transform-origin:0 0;">$98.56</div>
</div>
<div class="b" style="left:274px;top:166px;width:14px;height:14px;border:2px solid #0d5a96;border-radius:2.5px;background:#fff;"></div>
<svg class="b" style="left:274px;top:198px" width="18" height="18" viewBox="0 0 18 18">
<rect x="0" y="0" width="18" height="18" rx="2.5" fill="#0d5a96"/>
<path d="M3.8 9.2 L7.3 12.6 L14.3 5.4" fill="none" stroke="#fff" stroke-width="1.8"/></svg>
<div class="b" style="left:274px;top:237px;width:14px;height:14px;border:2px solid #0d5a96;border-radius:2.5px;background:#fff;"></div>
<div class="b" style="left:274px;top:272px;width:14px;height:14px;border:2px solid #0d5a96;border-radius:2.5px;background:#fff;"></div>
<div class="b" style="left:274px;top:308px;width:14px;height:14px;border:2px solid #0d5a96;border-radius:2.5px;background:#fff;"></div>
<div class="b" style="left:274px;top:345px;width:14px;height:14px;border:2px solid #0d5a96;border-radius:2.5px;background:#fff;"></div>
<div class="b" style="left:274px;top:383px;width:14px;height:14px;border:2px solid #0d5a96;border-radius:2.5px;background:#fff;"></div>
<div class="b" style="left:274px;top:418px;width:14px;height:14px;border:2px solid #0d5a96;border-radius:2.5px;background:#fff;"></div>
<div class="b" style="left:274px;top:454px;width:14px;height:14px;border:2px solid #0d5a96;border-radius:2.5px;background:#fff;"></div>
<div class="b" style="left:274px;top:499px;width:14px;height:14px;border:2px solid #0d5a96;border-radius:2.5px;background:#fff;"></div>
<div class="b" style="left:274px;top:544px;width:14px;height:14px;border:2px solid #0d5a96;border-radius:2.5px;background:#fff;"></div>
<div class="b" style="left:274px;top:589px;width:14px;height:14px;border:2px solid #0d5a96;border-radius:2.5px;background:#fff;"></div>
<div class="b" style="left:274px;top:634px;width:14px;height:14px;border:2px solid #0d5a96;border-radius:2.5px;background:#fff;"></div>
<div class="b" style="left:274px;top:679px;width:14px;height:14px;border:2px solid #0d5a96;border-radius:2.5px;background:#fff;"></div>
<div class="b" style="left:1080px;top:206px;width:7px;height:128px;background:#cdcdcd;"></div>
<svg class="b" style="left:1079px;top:196px" width="9" height="6" viewBox="0 0 9 6"><path d="M0.8 5 L4.5 1.3 L8.2 5" fill="none" stroke="#e4e4e4" stroke-width="1"/></svg>
<svg class="b" style="left:1079px;top:701px" width="9" height="6" viewBox="0 0 9 6"><path d="M0.8 1 L4.5 4.7 L8.2 1" fill="none" stroke="#e4e4e4" stroke-width="1"/></svg>
<div class="b" style="left:285px;top:716px;width:583px;height:7px;background:#d6d6d6;"></div>
<svg class="b" style="left:274px;top:715px" width="6" height="9" viewBox="0 0 6 9"><path d="M5 0.8 L1.3 4.5 L5 8.2" fill="none" stroke="#e4e4e4" stroke-width="1"/></svg>
<svg class="b" style="left:1066px;top:715px" width="6" height="9" viewBox="0 0 6 9"><path d="M1 0.8 L4.7 4.5 L1 8.2" fill="none" stroke="#e4e4e4" stroke-width="1"/></svg>
<div class="t" style="top:133.00px;font-size:12px;line-height:15px;color:#3a3a3a;left:1146.30px;transform:scaleX(0.8716);transform-origin:0 0;">BILLS</div>
<div class="t" style="top:133.00px;font-size:12px;line-height:15px;color:#3a3a3a;left:1273.60px;transform:scaleX(0.9287);transform-origin:0 0;">VENDOR</div>
<div class="b" style="left:1092px;top:157px;width:137px;height:2px;background:#1565a0;"></div>
<div class="b" style="left:1229px;top:158px;width:136px;height:1px;background:#e4e4e4;"></div>
<div class="t" style="top:177.00px;font-size:13px;line-height:16px;color:#1e1e1e;left:1108.20px;transform:scaleX(0.9557);transform-origin:0 0;-webkit-text-stroke:0.25px #1e1e1e;">SUMMARY</div>
<div class="t" style="top:206.00px;font-size:12px;line-height:15px;color:#222222;left:1108.50px;transform:scaleX(0.9397);transform-origin:0 0;">Total Due:</div>
<div class="t" style="top:206.00px;font-size:12px;line-height:15px;color:#222222;right:15.80px;text-align:right;transform:scaleX(0.8942);transform-origin:100% 0;">$77,681.11</div>
<div class="b" style="left:1108px;top:228px;width:242px;height:2px;background:#e6ebef;"></div>
<div class="t" style="top:247.00px;font-size:13px;line-height:16px;color:#1e1e1e;left:1108.20px;transform:scaleX(0.9202);transform-origin:0 0;-webkit-text-stroke:0.25px #1e1e1e;">RELATED DOCUMENTS</div>
<div class="b" style="left:1092px;top:499px;width:273px;height:4px;background:#ededed;"></div>
<div class="t" style="top:512.00px;font-size:12px;line-height:15px;color:#1e1e1e;font-weight:bold;left:1108.20px;transform:scaleX(0.8905);transform-origin:0 0;">ACCEPT PAYMENT</div>
<div class="b" style="left:1108px;top:539px;width:79px;height:26px;background:#ececec;border-radius:2px;"></div>
<div class="t" style="top:546.00px;font-size:12px;line-height:15px;color:#1864a0;left:1132.60px;transform:scaleX(0.8789);transform-origin:0 0;">CARD</div>
<div class="b" style="left:1191px;top:539px;width:77px;height:26px;background:#ececec;border-radius:2px;"></div>
<div class="t" style="top:546.00px;font-size:12px;line-height:15px;color:#1864a0;left:1211.60px;transform:scaleX(0.8905);transform-origin:0 0;">CHECK</div>
<div class="b" style="left:1271px;top:539px;width:77px;height:26px;background:#ececec;border-radius:2px;"></div>
<div class="t" style="top:546.00px;font-size:12px;line-height:15px;color:#1864a0;left:1301.40px;transform:scaleX(0.9113);transform-origin:0 0;">CASH</div>
<svg class="b" style="left:1286px;top:548px" width="13" height="10" viewBox="0 0 13 10"><path d="M1 5 L4.6 8.6 L12 1.3" fill="none" stroke="#1864a0" stroke-width="1.7"/></svg>
<div class="b" style="left:1092px;top:577px;width:273px;height:1px;background:#ebebeb;"></div>
<div class="t" style="top:594.00px;font-size:12.5px;line-height:16px;color:#1e1e1e;font-weight:bold;left:1100.40px;transform:scaleX(0.9001);transform-origin:0 0;">Selected Bills:</div>
<div class="t" style="top:594.00px;font-size:12.5px;line-height:16px;color:#1e1e1e;font-weight:bold;right:22.60px;text-align:right;transform:scaleX(0.9842);transform-origin:100% 0;">$77,681.11</div>
<div class="b" style="left:1100px;top:617px;width:243px;height:1px;background:#e6e6e6;"></div>
<div class="t" style="top:626.00px;font-size:12.5px;line-height:16px;color:#1e1e1e;font-weight:bold;left:1100.40px;transform:scaleX(0.9024);transform-origin:0 0;">Payments</div>
<div class="t" style="top:626.00px;font-size:12.5px;line-height:16px;color:#1e1e1e;font-weight:bold;right:22.60px;text-align:right;transform:scaleX(0.9485);transform-origin:100% 0;">$3.00</div>
<div class="t" style="top:642.00px;font-size:12px;line-height:15px;color:#2a2a2a;left:1100.40px;transform:scaleX(0.9023);transform-origin:0 0;">Cash 1:</div>
<div class="t" style="top:642.00px;font-size:12px;line-height:15px;color:#2a2a2a;right:22.20px;text-align:right;transform:scaleX(0.8782);transform-origin:100% 0;">$3.00</div>
<div class="t" style="top:656.00px;font-size:12.5px;line-height:16px;color:#1e1e1e;font-weight:bold;left:1100.40px;transform:scaleX(0.9141);transform-origin:0 0;">Total Applied:</div>
<div class="t" style="top:656.00px;font-size:12.5px;line-height:16px;color:#1e1e1e;font-weight:bold;right:22.60px;text-align:right;transform:scaleX(0.9485);transform-origin:100% 0;">$3.00</div>
<div class="b" style="left:1355px;top:593px;width:7px;height:23px;background:#cdcdcd;"></div>
<svg class="b" style="left:1354px;top:581px" width="9" height="6" viewBox="0 0 9 6"><path d="M0.8 5 L4.5 1.3 L8.2 5" fill="none" stroke="#e4e4e4" stroke-width="1"/></svg>
<svg class="b" style="left:1354px;top:659px" width="9" height="6" viewBox="0 0 9 6"><path d="M0.8 1 L4.5 4.7 L8.2 1" fill="none" stroke="#e4e4e4" stroke-width="1"/></svg>
<div class="b" style="left:1108px;top:687px;width:113px;height:25px;background:#ececec;"></div>
<div class="t" style="top:693.00px;font-size:12px;line-height:15px;color:#1864a0;left:1142.40px;transform:scaleX(0.8981);transform-origin:0 0;">CANCEL</div>
<div class="b" style="left:1237px;top:687px;width:113px;height:25px;background:#0b5a97;"></div>
<div class="t" style="top:693.00px;font-size:12px;line-height:15px;color:#ffffff;left:1280.90px;transform:scaleX(0.8221);transform-origin:0 0;">SAVE</div>
<svg class="b" style="left:0;top:0" width="1365" height="729" viewBox="0 0 1365 729">
<path d="M1245.5 459.5 L1287.5 543" stroke="#ff0000" stroke-width="3" stroke-linecap="round"/>
<path d="M1282.6 541.8 L1292.2 536.2 L1292.8 551.8 Z" fill="#ff0000" stroke="#ff0000" stroke-width="0.6" stroke-linejoin="round"/>
<path d="M1043 609.8 L1088 628" stroke="#ff0000" stroke-width="3.2" stroke-linecap="round"/>
<path d="M1087.4 621.8 L1083.9 630.8 L1099.2 631.6 Z" fill="#ff0000" stroke="#ff0000" stroke-width="0.6" stroke-linejoin="round"/>
</svg>
</div></body></html>
